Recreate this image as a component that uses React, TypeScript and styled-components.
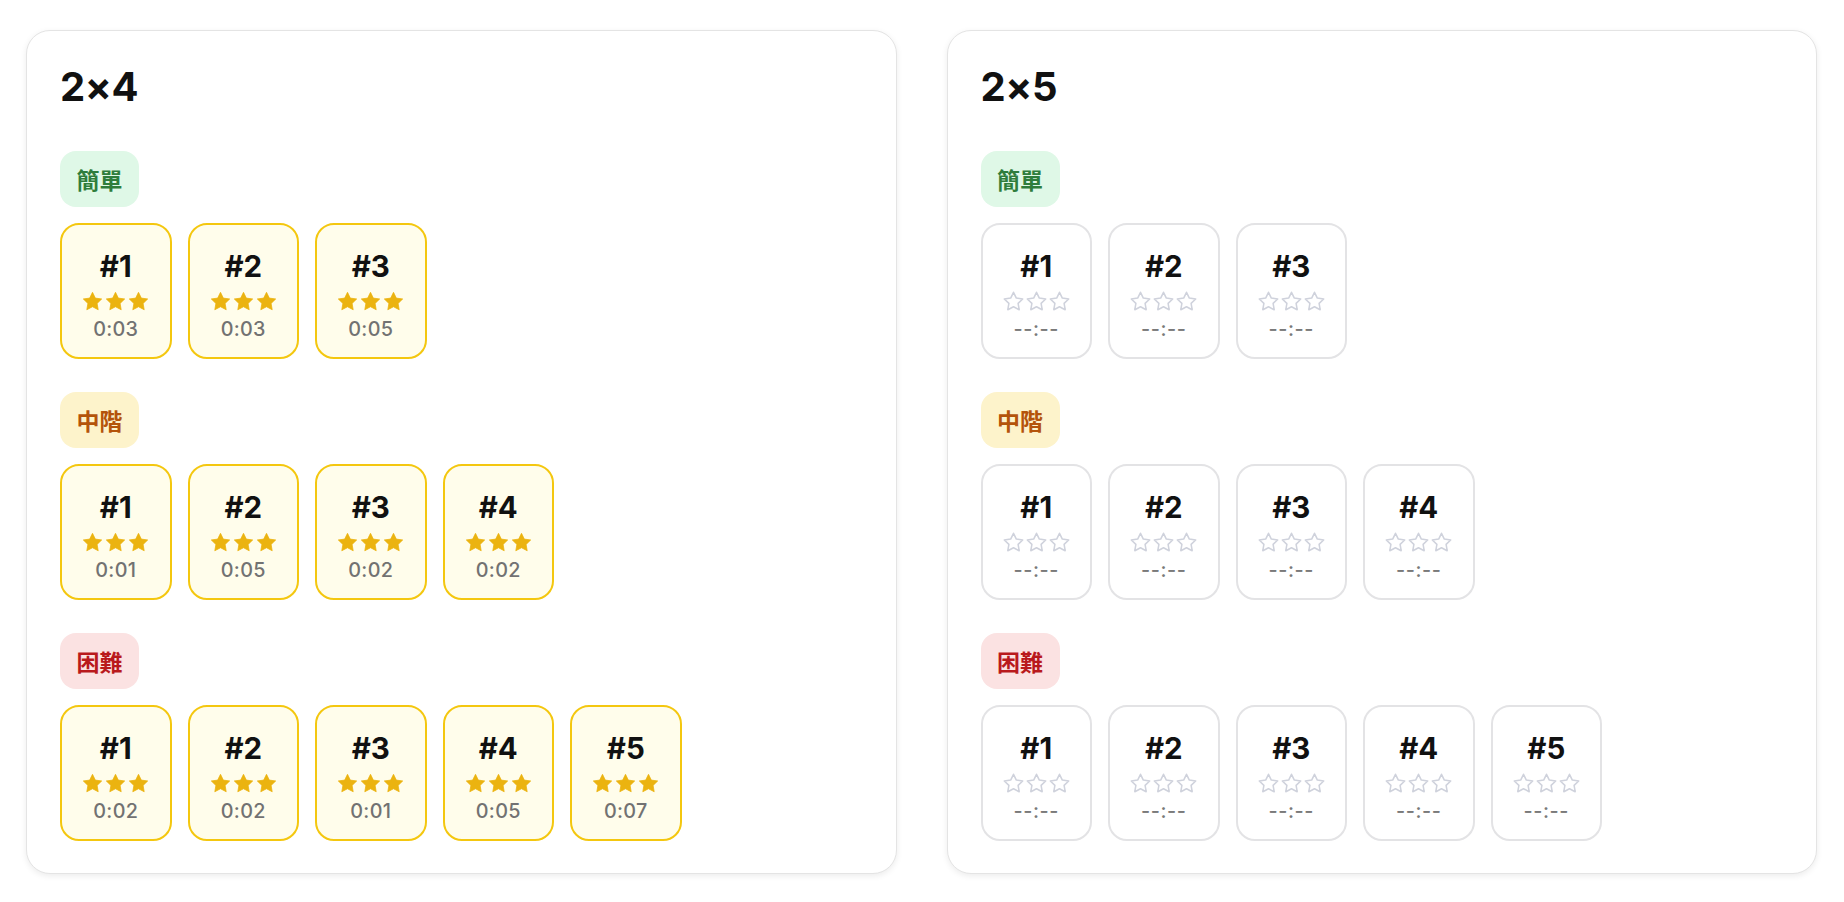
import React from "react";
import styled, { createGlobalStyle, css } from "styled-components";

type Tier = "easy" | "medium" | "hard";

interface Level {
    id: number;
    time?: string;
}

interface Section {
    tier: Tier;
    label: string;
    levels: Level[];
}

interface Board {
    title: string;
    sections: Section[];
}

const tierColors: Record<Tier, { bg: string; fg: string }> = {
    easy: { bg: "#dff8e7", fg: "#2f7d3c" },
    medium: { bg: "#fdf3cb", fg: "#b4540b" },
    hard: { bg: "#fbe2e2", fg: "#b9191c" },
};

const make = (times: (string | undefined)[]): Level[] =>
    times.map((time, i) => ({ id: i + 1, time }));

const boards: Board[] = [
    {
        title: "2×4",
        sections: [
            { tier: "easy", label: "簡單", levels: make(["0:03", "0:03", "0:05"]) },
            { tier: "medium", label: "中階", levels: make(["0:01", "0:05", "0:02", "0:02"]) },
            { tier: "hard", label: "困難", levels: make(["0:02", "0:02", "0:01", "0:05", "0:07"]) },
        ],
    },
    {
        title: "2×5",
        sections: [
            { tier: "easy", label: "簡單", levels: make([undefined, undefined, undefined]) },
            { tier: "medium", label: "中階", levels: make([undefined, undefined, undefined, undefined]) },
            { tier: "hard", label: "困難", levels: make([undefined, undefined, undefined, undefined, undefined]) },
        ],
    },
];

const STAR_POINTS = "12,2.4 14.95,8.45 21.6,9.35 16.8,14 17.95,20.6 12,17.45 6.05,20.6 7.2,14 2.4,9.35 9.05,8.45";

function Star({ filled }: { filled: boolean }) {
    return (
        <StarIcon viewBox="0 0 24 24" $filled={filled}>
            <polygon points={STAR_POINTS} />
        </StarIcon>
    );
}

export default function App() {
    return (
        <>
            <GlobalStyle />
            <Page>
                {boards.map((board) => (
                    <Card key={board.title}>
                        <Title>{board.title}</Title>
                        <Sections>
                            {board.sections.map((section) => (
                                <SectionBlock key={section.tier}>
                                    <TierBadge $tier={section.tier}>{section.label}</TierBadge>
                                    <TileRow>
                                        {section.levels.map((level) => (
                                            <Tile key={level.id} $done={!!level.time}>
                                                <TileNumber>#{level.id}</TileNumber>
                                                <Stars>
                                                    {[0, 1, 2].map((s) => (
                                                        <Star key={s} filled={!!level.time} />
                                                    ))}
                                                </Stars>
                                                <TileTime $done={!!level.time}>
                                                    {level.time ?? "--:--"}
                                                </TileTime>
                                            </Tile>
                                        ))}
                                    </TileRow>
                                </SectionBlock>
                            ))}
                        </Sections>
                    </Card>
                ))}
            </Page>
        </>
    );
}

const GlobalStyle = createGlobalStyle`
    * {
        box-sizing: border-box;
    }
    body {
        margin: 0;
        background: #ffffff;
        font-family: Inter, "Noto Sans CJK TC", "Noto Sans", sans-serif;
        color: #111111;
    }
`;

const Page = styled.div`
    display: grid;
    grid-template-columns: 1fr 1fr;
    gap: 50px;
    padding: 30px 27px 28px 26px;
    align-items: start;
`;

const Card = styled.section`
    background: #ffffff;
    border: 1px solid #e4e4e4;
    border-radius: 24px;
    box-shadow: 0 2px 6px rgba(0, 0, 0, 0.08);
    padding: 32px 33px 32px;
`;

const Title = styled.h2`
    margin: 0 0 39.5px;
    font-size: 40px;
    line-height: 48.4px;
    font-weight: 700;
    letter-spacing: -0.4px;
`;

const Sections = styled.div`
    display: flex;
    flex-direction: column;
    gap: 32.5px;
`;

const SectionBlock = styled.div`
    display: flex;
    flex-direction: column;
    align-items: flex-start;
    gap: 16.5px;
`;

const TierBadge = styled.span<{ $tier: Tier }>`
    display: inline-block;
    height: 56px;
    padding: 0 16.5px;
    border-radius: 16px;
    font-family: "Noto Sans CJK TC", sans-serif;
    font-size: 23px;
    line-height: 56px;
    font-weight: 700;
    background: ${(p) => tierColors[p.$tier].bg};
    color: ${(p) => tierColors[p.$tier].fg};
`;

const TileRow = styled.div`
    display: flex;
    gap: 16px;
`;

const Tile = styled.div<{ $done: boolean }>`
    width: 111.5px;
    height: 136px;
    padding-top: 23px;
    border-radius: 19px;
    display: flex;
    flex-direction: column;
    align-items: center;
    ${(p) =>
        p.$done
            ? css`
                  background: #fffdeb;
                  border: 2px solid #f4c70f;
              `
            : css`
                  background: #ffffff;
                  border: 2px solid #e3e3e5;
              `}
`;

const TileNumber = styled.div`
    font-size: 29.5px;
    line-height: 36px;
    font-weight: 700;
    color: #111111;
`;

const Stars = styled.div`
    display: flex;
    margin-top: 5.5px;
    height: 23px;
`;

const StarIcon = styled.svg<{ $filled: boolean }>`
    width: 23px;
    height: 23px;
    polygon {
        stroke-linejoin: round;
        ${(p) =>
            p.$filled
                ? css`
                      fill: #ebb310;
                      stroke: #ebb310;
                      stroke-width: 0.8;
                  `
                : css`
                      fill: none;
                      stroke: #cfd2dc;
                      stroke-width: 1.6;
                  `}
    }
`;

const TileTime = styled.div<{ $done: boolean }>`
    margin-top: 4.5px;
    font-size: 19.8px;
    line-height: 24px;
    font-weight: 500;
    color: ${(p) => (p.$done ? "#727272" : "#7a7a7a")};
    letter-spacing: ${(p) => (p.$done ? "0.3px" : "0.6px")};
`;
